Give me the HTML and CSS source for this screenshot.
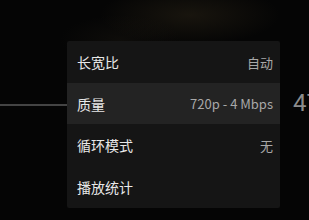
FILE: index.html
```html
<!DOCTYPE html>
<html lang="zh-CN">
<head>
    <meta charset="UTF-8">
    <meta name="viewport" content="width=device-width, initial-scale=1.0">
    <title>播放设置</title>
    <link rel="stylesheet" href="styles.css">
</head>
<body>
    <div class="player">
        <div class="progress"></div>
        <div class="time">47</div>
        <div class="settings-menu">
            <div class="menu-item">
                <span class="label">长宽比</span>
                <span class="value">自动</span>
            </div>
            <div class="menu-item active">
                <span class="label">质量</span>
                <span class="value">720p - 4 Mbps</span>
            </div>
            <div class="menu-item">
                <span class="label">循环模式</span>
                <span class="value">无</span>
            </div>
            <div class="menu-item">
                <span class="label">播放统计</span>
            </div>
        </div>
    </div>
</body>
</html>
```

FILE: styles.css
```css
body {
    margin: 0;
    background-color: #050505;
    font-family: "Noto Sans CJK SC", "Noto Sans", sans-serif;
    overflow: hidden;
}
.player {
    position: relative;
    width: 309px;
    height: 220px;
    background:
        radial-gradient(ellipse 90px 30px at 190px 15px, rgba(60,50,30,0.35), transparent),
        radial-gradient(ellipse 60px 25px at 120px 40px, rgba(40,35,25,0.25), transparent),
        #050505;
    padding-top: 41px;
    box-sizing: border-box;
}
.progress {
    position: absolute;
    left: 0;
    top: 104px;
    width: 70px;
    height: 2px;
    background-color: #444;
}
.time {
    position: absolute;
    left: 293px;
    top: 89px;
    font-family: "Roboto", sans-serif;
    font-size: 24px;
    color: #8c8c8c;
}
.settings-menu {
    position: relative;
    margin-left: 67px;
    width: 213px;
    background-color: #151515;
    border-radius: 2px;
    overflow: hidden;
}
.menu-item {
    height: 42px;
    display: flex;
    align-items: center;
    justify-content: space-between;
    padding: 0 7px 0 10px;
}
.menu-item.active {
    height: 41px;
    background-color: #232323;
}
.label {
    font-size: 14px;
    color: #e8e8e8;
}
.value {
    font-size: 13px;
    color: #a8a8a8;
}
```
